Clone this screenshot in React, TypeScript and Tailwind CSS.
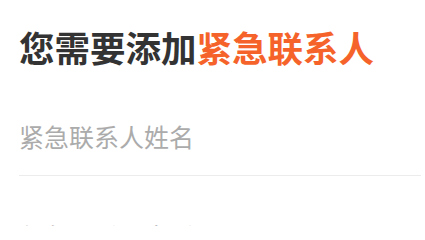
export default function App() {
  return (
    <div
      className="w-[425px] h-[226px] overflow-hidden bg-white"
      style={{ fontFamily: '"Noto Sans CJK SC", "Noto Sans", sans-serif' }}
    >
      <div className="pl-[19px] pr-[4px] pt-[28px]">
        <h1 className="text-[35.5px] leading-[37px] font-bold text-[#333333]">
          您需要添加<span className="text-[#f5632a]">紧急联系人</span>
        </h1>
        <div className="mt-[56px] border-b border-[#ececec] pb-[23px]">
          <input
            className="w-full bg-transparent text-[25px] leading-[30px] text-[#333] placeholder:text-[#ababab] outline-none"
            placeholder="紧急联系人姓名"
          />
        </div>
        <div className="mt-[45px] text-[25px] leading-[30px] text-[#888888]">紧急联系人电话</div>
      </div>
    </div>
  );
}
